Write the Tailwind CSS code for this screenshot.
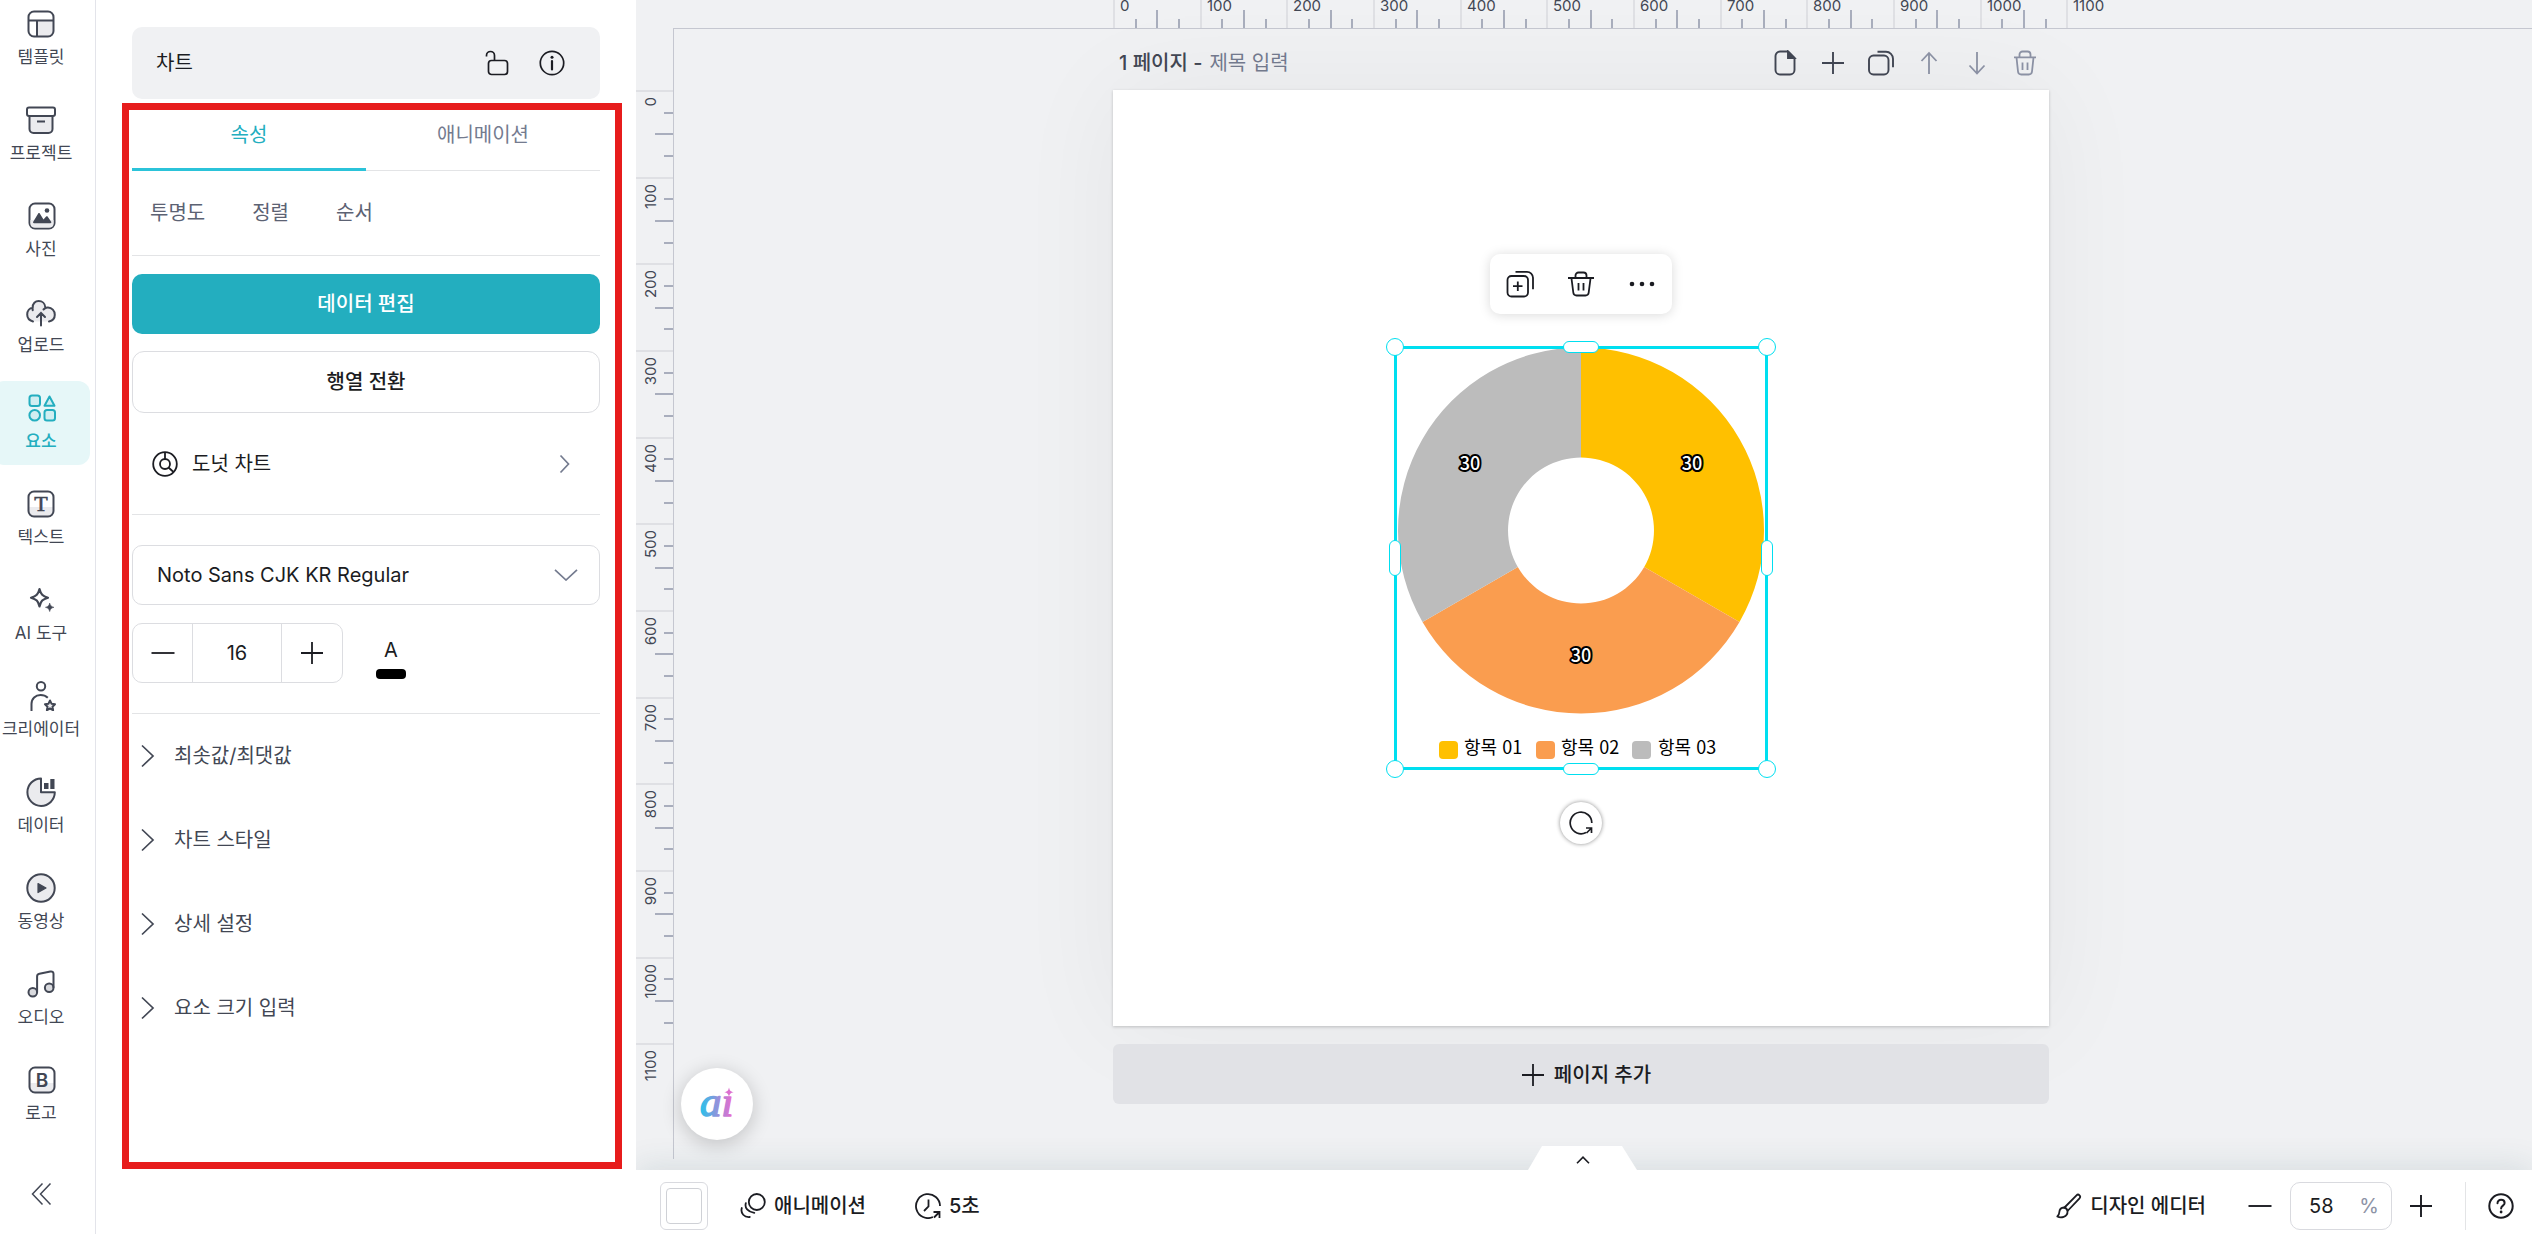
<!DOCTYPE html>
<html lang="ko">
<head>
    <meta charset="UTF-8">
    <meta name="viewport" content="width=device-width, initial-scale=1.0">
    <title>디자인 에디터</title>
    <script src="https://cdn.jsdelivr.net/npm/@tailwindcss/browser@4"></script>
</head>
<body class="flex h-screen overflow-hidden bg-white font-['Inter','Noto_Sans_CJK_KR',sans-serif] text-[20px] leading-7 text-[#1b1c22]">

    <!-- Icon rail -->
    <nav class="flex w-24 shrink-0 flex-col overflow-hidden border-r border-[#e3e4ea] text-[17px] leading-5 text-[#424754]">
        <ul class="-mt-[3px] -ml-2 flex w-[98px] flex-col gap-3">
            <li>
                <a href="#template" class="flex h-[84px] flex-col items-center gap-2 pt-3">
                    <svg class="size-[30px]" viewBox="0 0 30 30" fill="none" stroke="currentColor" stroke-width="2">
                        <path d="M11 11.500H27.500V22a5.500 5.500 0 0 1-5.500 5.500H11z" fill="#ebebee" stroke="none" />
                        <rect x="2.500" y="2.500" width="25" height="25" rx="5.500" />
                        <path d="M2.500 11.500h25M11 11.500v16" />
                    </svg>
                    템플릿
                </a>
            </li>
            <li>
                <a href="#project" class="flex h-[84px] flex-col items-center gap-2 pt-3">
                    <svg class="size-[30px]" viewBox="0 0 30 30" fill="none" stroke="currentColor" stroke-width="2">
                        <path d="M3.500 11v13a4 4 0 0 0 4 4h15a4 4 0 0 0 4-4V11z" fill="#ebebee" />
                        <rect x="1" y="2.500" width="28" height="8.500" rx="2" fill="#fff" />
                        <path d="M11 16.500h8" />
                    </svg>
                    프로젝트
                </a>
            </li>
            <li>
                <a href="#photo" class="flex h-[84px] flex-col items-center gap-2 pt-3">
                    <svg class="size-[30px]" viewBox="0 0 30 30" fill="none" stroke="currentColor" stroke-width="2">
                        <rect x="3.500" y="2.500" width="25" height="25" rx="5.500" />
                        <path d="M4.500 19h23v3.500a4 4 0 0 1-4 4h-15a4 4 0 0 1-4-4z" fill="#ebebee" stroke="none" />
                        <circle cx="21" cy="9.500" r="2.300" fill="currentColor" stroke="none" />
                        <path d="M8 22.300c-.8 0-1.200-.8-.8-1.500l5-8.300c.4-.6 1.200-.6 1.600 0l3.700 6 2.600-3c.4-.5 1.100-.5 1.500 0l3.600 5.300c.4.700 0 1.500-.8 1.500z" fill="currentColor" stroke="none" />
                    </svg>
                    사진
                </a>
            </li>
            <li>
                <a href="#upload" class="flex h-[84px] flex-col items-center gap-2 pt-3">
                    <svg class="size-[30px]" viewBox="0 0 30 30" fill="none" stroke="currentColor" stroke-width="2" stroke-linecap="round">
                        <path d="M7 24.500C3.500 23.500 1.200 21 1.200 17.500c0-3.700 2.500-6.500 6-6.800C7 6.500 9.500 4 13.200 4c3.500 0 6.200 2.600 6.500 6.300 5 .2 9 3 9 7.700 0 3.300-2.200 5.700-5.500 6.500z" fill="#ebebee" stroke="none" />
                        <path d="M7 24.500C3.500 23.500 1.200 21 1.200 17.500c0-3.700 2.300-6.400 5.500-6.800C6.500 6.500 9.300 4 12.700 4c3.300 0 6.400 2.300 6.600 6.300M17.500 12.500c1.500-1.800 3-2.200 4.500-2.100 3.800.3 6.800 3.300 6.800 7.300 0 3.600-2.300 6-5.800 6.800M6.700 10.700v2.500M15 28.500V16.200M11 20l4-4 4 4" />
                    </svg>
                    업로드
                </a>
            </li>
            <li>
                <a href="#element" aria-current="page" class="flex h-[84px] flex-col items-center gap-2 rounded-xl bg-[#e6f7f8] pt-3 font-medium text-[#23aebf]">
                    <svg class="size-[30px]" viewBox="0 0 30 30" fill="#d0eef1" stroke="currentColor" stroke-width="2">
                        <rect x="3.500" y="2.500" width="10.500" height="10.500" rx="2.500" />
                        <path d="M23.500 3.500l5 9.300h-10z" stroke-linejoin="round" />
                        <circle cx="8.700" cy="22.300" r="5.300" />
                        <rect x="18.500" y="17" width="10.500" height="10.500" rx="2.500" />
                    </svg>
                    요소
                </a>
            </li>
            <li>
                <a href="#text" class="flex h-[84px] flex-col items-center gap-2 pt-3">
                    <svg class="size-[30px]" viewBox="0 0 30 30" fill="none" stroke="currentColor" stroke-width="2">
                        <path d="M3 18h24v4.500a5 5 0 0 1-5 5H8a5 5 0 0 1-5-5z" fill="#ebebee" stroke="none" />
                        <rect x="2.500" y="2.500" width="25" height="25" rx="5.500" />
                        <text x="15" y="22" text-anchor="middle" font-family="Liberation Serif" font-size="22" fill="currentColor" stroke-width=".6">T</text>
                    </svg>
                    텍스트
                </a>
            </li>
            <li>
                <a href="#ai" class="flex h-[84px] flex-col items-center gap-2 pt-3">
                    <svg class="size-[30px]" viewBox="0 0 30 30" fill="none" stroke="currentColor" stroke-width="2.200" stroke-linejoin="round">
                        <path d="M13.500 4c1.400 5.500 3 7.200 8.500 8.700-5.500 1.500-7.100 3.200-8.500 8.700-1.400-5.500-3-7.200-8.500-8.700 5.500-1.500 7.100-3.200 8.500-8.700z" />
                        <path d="M23.700 18c.8 2.800 1.500 3.500 4.300 4.300-2.800.8-3.500 1.500-4.300 4.300-.8-2.800-1.500-3.500-4.300-4.300 2.800-.8 3.500-1.500 4.300-4.300z" fill="currentColor" stroke-width=".5" />
                    </svg>
                    AI 도구
                </a>
            </li>
            <li>
                <a href="#creator" class="flex h-[84px] flex-col items-center gap-2 pt-3">
                    <svg class="size-[30px]" viewBox="0 0 30 30" fill="none" stroke="currentColor" stroke-width="2">
                        <circle cx="15" cy="5.200" r="4.200" />
                        <path d="M5.500 30v-7c0-5.500 4-9 9-9 3 0 5.300.8 7.300 2.700" />
                        <path d="M24 19.500l1.500 3.200 3.500.5-2.500 2.500.6 3.500-3.100-1.700-3.100 1.700.6-3.500-2.500-2.500 3.500-.5z" fill="#ebebee" stroke-linejoin="round" />
                    </svg>
                    크리에이터
                </a>
            </li>
            <li>
                <a href="#data" class="flex h-[84px] flex-col items-center gap-2 pt-3">
                    <svg class="size-[30px]" viewBox="0 0 30 30" fill="none" stroke="currentColor" stroke-width="2">
                        <path d="M15 1.500a13.700 13.700 0 1 0 13.800 13.800H15z" fill="#ebebee" stroke-linejoin="round" />
                        <path d="M18 6h4.500v6H18zM24.300 2h4.200v10h-4.200z" fill="currentColor" stroke="none" />
                    </svg>
                    데이터
                </a>
            </li>
            <li>
                <a href="#video" class="flex h-[84px] flex-col items-center gap-2 pt-3">
                    <svg class="size-[30px]" viewBox="0 0 30 30" fill="none" stroke="currentColor" stroke-width="2">
                        <circle cx="15" cy="15" r="13.700" fill="#ebebee" />
                        <path d="M12 10.500l8 4.500-8 4.500z" fill="currentColor" stroke-width="1.200" stroke-linejoin="round" />
                    </svg>
                    동영상
                </a>
            </li>
            <li>
                <a href="#audio" class="flex h-[84px] flex-col items-center gap-2 pt-3">
                    <svg class="size-[30px]" viewBox="0 0 30 30" fill="none" stroke="currentColor" stroke-width="2" stroke-linejoin="round">
                        <circle cx="6.800" cy="23.300" r="4.300" fill="#d9dade" />
                        <circle cx="23.200" cy="18.700" r="4.300" fill="#d9dade" />
                        <path d="M11.100 23.300V7.500c0-1.500.8-2.500 2.300-2.800l11-2.200c1.800-.4 3.100.6 3.100 2.300v13.900" />
                    </svg>
                    오디오
                </a>
            </li>
            <li>
                <a href="#logo" class="flex h-[84px] flex-col items-center gap-2 pt-3">
                    <svg class="size-[30px]" viewBox="0 0 30 30" fill="none" stroke="currentColor" stroke-width="2">
                        <path d="M4 18h24v4.500a5 5 0 0 1-5 5H9a5 5 0 0 1-5-5z" fill="#ebebee" stroke="none" />
                        <rect x="3.500" y="2.500" width="25" height="25" rx="5.500" />
                        <text x="16" y="22" text-anchor="middle" font-family="Inter" font-size="19" font-weight="600" fill="currentColor" stroke="none">B</text>
                    </svg>
                    로고
                </a>
            </li>
        </ul>
        <button type="button" aria-label="접기" class="mt-auto mb-6 flex h-8 w-[82px] shrink-0 items-center justify-center">
            <svg class="size-6" viewBox="0 0 24 24" fill="none" stroke="currentColor" stroke-width="1.500">
                <path d="M13.500 1.500L3.500 12l10 10.500M21.500 1.500L11.500 12l10 10.500" />
            </svg>
        </button>
    </nav>

    <!-- Property panel -->
    <aside class="flex w-[540px] shrink-0 flex-col pt-[27px] pr-[14px] pb-[65px] pl-[26px]">
        <header class="mr-[22px] ml-[10px] flex h-[72px] shrink-0 items-center rounded-[10px] bg-[#f0f1f3] pr-[35px] pl-6">
            <h1 class="mr-auto">차트</h1>
            <button type="button" aria-label="잠금" class="mr-[29px]">
                <svg class="size-[26px]" viewBox="0 0 26 26" fill="none" stroke="currentColor" stroke-width="1.700">
                    <path d="M2.500 6.500v-1a4 4 0 0 1 8 0v5" />
                    <rect x="4.500" y="10.500" width="19" height="14" rx="3" />
                </svg>
            </button>
            <button type="button" aria-label="정보">
                <svg class="size-[26px]" viewBox="0 0 26 26" fill="none" stroke="currentColor" stroke-width="1.700">
                    <circle cx="13" cy="13" r="11.700" />
                    <path d="M13 11v8.500" stroke-width="2.200" stroke-linecap="round" />
                    <circle cx="13" cy="7.200" r="1.500" fill="currentColor" stroke="none" />
                </svg>
            </button>
        </header>

        <section class="mt-1 flex grow flex-col border-[7px] border-[#e71c1c] pr-[15px] pl-[3px]">
            <div role="tablist" class="grid h-[61px] grid-cols-2 text-center">
                <button type="button" role="tab" aria-selected="true" class="border-b-3 border-[#2bc3d9] pb-2 text-[#23aebf]">속성</button>
                <button type="button" role="tab" aria-selected="false" class="border-b border-[#e3e4e6] pb-[10px] text-[#747b8f]">애니메이션</button>
            </div>

            <div class="flex h-[85px] items-center gap-[47px] border-b border-[#e3e4e6] px-[18px] text-[#5c6273]">
                <button type="button">투명도</button>
                <button type="button">정렬</button>
                <button type="button">순서</button>
            </div>

            <button type="button" class="mt-[18px] h-15 rounded-[10px] bg-[#23aebf] font-medium text-white">데이터 편집</button>
            <button type="button" class="mt-[17px] h-[62px] rounded-xl border border-[#dcdde1] font-medium">행열 전환</button>

            <button type="button" class="flex h-[102px] items-center border-b border-[#e3e4e6] pr-[26px] pl-5">
                <svg class="mr-[14px] size-[26px]" viewBox="0 0 26 26" fill="none" stroke="currentColor" stroke-width="1.800">
                    <circle cx="13" cy="13" r="11.800" />
                    <circle cx="13" cy="13" r="5" />
                    <path d="M13 1.500V8M16.500 16.500l5 4.500" />
                </svg>
                도넛 차트
                <svg class="ml-auto h-5 w-[26px] text-[#747b8f]" viewBox="0 0 26 20" fill="none" stroke="currentColor" stroke-width="1.700">
                    <path d="M12.500 1.500l8 8.500-8 8.500" />
                </svg>
            </button>

            <div class="relative mt-[30px]">
                <select aria-label="글꼴" class="h-15 w-full appearance-none rounded-[10px] border border-[#dcdde1] bg-white px-6">
                    <option>Noto Sans CJK KR Regular</option>
                </select>
                <svg class="pointer-events-none absolute top-6 right-[22px] h-3 w-6 text-[#747b8f]" viewBox="0 0 24 12" fill="none" stroke="currentColor" stroke-width="1.700">
                    <path d="M1 .8L12 11 23 .8" />
                </svg>
            </div>

            <div class="mt-[18px] flex items-center border-b border-[#e3e4e6] pb-[30px]">
                <div class="flex h-15 w-[211px] divide-x divide-[#dcdde1] rounded-[10px] border border-[#dcdde1]">
                    <button type="button" aria-label="글자 작게" class="flex w-[60px] items-center justify-center">
                        <svg class="size-6" viewBox="0 0 24 24" fill="none" stroke="currentColor" stroke-width="1.800"><path d="M.5 12h23" /></svg>
                    </button>
                    <input type="text" aria-label="글자 크기" value="16" class="w-0 grow text-center">
                    <button type="button" aria-label="글자 크게" class="flex w-[60px] items-center justify-center">
                        <svg class="size-6" viewBox="0 0 24 24" fill="none" stroke="currentColor" stroke-width="1.800"><path d="M1 12h22M12 1v22" /></svg>
                    </button>
                </div>
                <button type="button" aria-label="글자 색" class="ml-[33px] flex flex-col items-center gap-[5px] pt-2">
                    <span>A</span>
                    <span class="h-[10px] w-[30px] rounded bg-black"></span>
                </button>
            </div>

            <ul class="text-[#424754]">
                <li>
                    <button type="button" class="flex h-21 w-full items-center gap-[19px] pl-[9px]">
                        <svg class="h-6 w-[14px]" viewBox="0 0 14 24" fill="none" stroke="currentColor" stroke-width="1.700"><path d="M1 1.500L12 12 1 22.500" /></svg>
                        최솟값/최댓값
                    </button>
                </li>
                <li>
                    <button type="button" class="flex h-21 w-full items-center gap-[19px] pl-[9px]">
                        <svg class="h-6 w-[14px]" viewBox="0 0 14 24" fill="none" stroke="currentColor" stroke-width="1.700"><path d="M1 1.500L12 12 1 22.500" /></svg>
                        차트 스타일
                    </button>
                </li>
                <li>
                    <button type="button" class="flex h-21 w-full items-center gap-[19px] pl-[9px]">
                        <svg class="h-6 w-[14px]" viewBox="0 0 14 24" fill="none" stroke="currentColor" stroke-width="1.700"><path d="M1 1.500L12 12 1 22.500" /></svg>
                        상세 설정
                    </button>
                </li>
                <li>
                    <button type="button" class="flex h-21 w-full items-center gap-[19px] pl-[9px]">
                        <svg class="h-6 w-[14px]" viewBox="0 0 14 24" fill="none" stroke="currentColor" stroke-width="1.700"><path d="M1 1.500L12 12 1 22.500" /></svg>
                        요소 크기 입력
                    </button>
                </li>
            </ul>
        </section>
    </aside>

    <div class="flex min-w-0 grow flex-col overflow-hidden">
        <div class="flex min-h-0 grow overflow-hidden bg-[#f0f1f3]">
            <!-- Vertical ruler -->
            <div class="mb-[11px] flex w-[38px] shrink-0 flex-col pt-7">
                <div id="ruler-y" class="relative grow border-r border-[#c5c7d0] text-[15px] leading-5 text-[#424754]"></div>
            </div>

            <main class="relative flex min-w-0 grow flex-col">
                <!-- Horizontal ruler -->
                <div class="h-[29px] shrink-0 border-b border-[#c5c7d0] pr-11">
                    <div id="ruler-x" class="relative mx-auto h-7 w-[936px] text-[15px] leading-3 text-[#424754]"></div>
                </div>

                <div class="flex grow flex-col items-center pr-11">
                    <div class="w-[936px]">
                        <div class="flex h-[61px] items-center pt-[6px] pl-[6px] text-[#424754]">
                            <h2 class="font-medium">1 페이지 -</h2>
                            <input type="text" aria-label="페이지 제목" placeholder="제목 입력" class="ml-[7px] w-0 grow placeholder:text-[#747b8f]">
                            <div class="flex gap-[22px] pr-[11px]">
                                <button type="button" aria-label="메모">
                                    <svg class="size-[26px]" viewBox="0 0 26 26" fill="none" stroke="currentColor" stroke-width="1.900">
                                        <path d="M16 1.500H8a4.500 4.500 0 0 0-4.500 4.500v14A4.500 4.500 0 0 0 8 24.500h10a4.500 4.500 0 0 0 4.500-4.500V8z" stroke-linejoin="round" />
                                        <path d="M16 1.500V8h6.500z" fill="currentColor" />
                                    </svg>
                                </button>
                                <button type="button" aria-label="페이지 추가">
                                    <svg class="size-[26px]" viewBox="0 0 26 26" fill="none" stroke="currentColor" stroke-width="1.900"><path d="M2 13h22M13 2v22" /></svg>
                                </button>
                                <button type="button" aria-label="페이지 복제">
                                    <svg class="size-[26px]" viewBox="0 0 26 26" fill="none" stroke="currentColor" stroke-width="1.900">
                                        <rect x="1" y="5.500" width="19.500" height="19" rx="4.500" />
                                        <path d="M9.500 1.800h8.500a7 7 0 0 1 7 7v8.500" />
                                    </svg>
                                </button>
                                <button type="button" aria-label="위로" class="text-[#8d93a6]">
                                    <svg class="size-[26px]" viewBox="0 0 26 26" fill="none" stroke="currentColor" stroke-width="1.800"><path d="M13 24V3M5.500 11L13 3l7.500 8" /></svg>
                                </button>
                                <button type="button" aria-label="아래로" class="text-[#8d93a6]">
                                    <svg class="size-[26px]" viewBox="0 0 26 26" fill="none" stroke="currentColor" stroke-width="1.800"><path d="M13 2v21M5.500 15.500l7.500 8 7.500-8" /></svg>
                                </button>
                                <button type="button" aria-label="페이지 삭제" class="text-[#8d93a6]">
                                    <svg class="size-[26px]" viewBox="0 0 26 26" fill="none" stroke="currentColor" stroke-width="1.800">
                                        <path d="M2 7.300h22M7.500 7V4.500a3 3 0 0 1 3-3h5a3 3 0 0 1 3 3V7M4.500 7.500l1.500 14a3.300 3.300 0 0 0 3.300 3h7.400a3.300 3.300 0 0 0 3.300-3l1.500-14M10.500 12.500V20M15.500 12.500V20" />
                                    </svg>
                                </button>
                            </div>
                        </div>

                        <!-- Page -->
                        <div class="relative h-[936px] bg-white shadow-[0_1px_3px_rgba(0,0,0,0.2),0_0_100px_rgba(0,0,0,0.05)]">
                            <!-- Element toolbar -->
                            <div class="absolute top-[164px] left-1/2 grid h-15 w-[182px] -translate-x-1/2 grid-cols-3 place-items-center rounded-[10px] bg-white shadow-[0_1px_12px_rgba(0,0,0,0.15)]">
                                <button type="button" aria-label="복제">
                                    <svg class="size-7" viewBox="0 0 28 28" fill="none" stroke="currentColor" stroke-width="1.800">
                                        <rect x="1.500" y="6" width="20.500" height="20.500" rx="4" />
                                        <path d="M9.500 1.800H21a6 6 0 0 1 6 6v11.500M7 16.200h9.500M11.800 11.500V21" />
                                    </svg>
                                </button>
                                <button type="button" aria-label="삭제">
                                    <svg class="size-[26px]" viewBox="0 0 26 26" fill="none" stroke="currentColor" stroke-width="1.800">
                                        <path d="M0 7h26M7.500 7V4.500a3 3 0 0 1 3-3h5a3 3 0 0 1 3 3V7M3.500 7.500l1.800 14a3.300 3.300 0 0 0 3.300 3h8.800a3.300 3.300 0 0 0 3.300-3l1.800-14M10.500 12v7.500M15.500 12v7.500" />
                                    </svg>
                                </button>
                                <button type="button" aria-label="더보기">
                                    <svg class="size-[26px]" viewBox="0 0 26 26" fill="currentColor">
                                        <circle cx="3" cy="13" r="2.300" /><circle cx="13" cy="13" r="2.300" /><circle cx="23" cy="13" r="2.300" />
                                    </svg>
                                </button>
                            </div>

                            <!-- Donut chart with selection box -->
                            <div class="absolute top-[256px] left-[281px] w-[374px]">
                                <svg class="block h-[424px] w-[374px] font-['Noto_Sans_CJK_KR',sans-serif]" viewBox="0 0 374 424" role="img" aria-label="도넛 차트">
                                    <path d="M187 1.500A183 183 0 0 1 345.500 276L250.200 221A73 73 0 0 0 187 111.500z" fill="#ffc000" />
                                    <path d="M345.500 276A183 183 0 0 1 28.500 276L123.800 221A73 73 0 0 0 250.200 221z" fill="#fa9d4f" />
                                    <path d="M28.500 276A183 183 0 0 1 187 1.500V111.500A73 73 0 0 0 123.800 221z" fill="#bcbcbc" />
                                    <g fill="#fff" stroke="#000" stroke-width="4" stroke-linejoin="round" paint-order="stroke" font-size="18" font-weight="500" text-anchor="middle">
                                        <text x="298" y="124">30</text>
                                        <text x="187" y="316">30</text>
                                        <text x="76" y="124">30</text>
                                    </g>
                                    <rect x="45" y="395" width="19" height="18" rx="4" fill="#ffc000" />
                                    <rect x="142" y="395" width="19" height="18" rx="4" fill="#fa9d4f" />
                                    <rect x="238" y="395" width="19" height="18" rx="4" fill="#bcbcbc" />
                                    <g font-size="18" fill="#000">
                                        <text x="70" y="408">항목 01</text>
                                        <text x="167" y="408">항목 02</text>
                                        <text x="264" y="408">항목 03</text>
                                    </g>
                                </svg>
                                <div class="absolute inset-0 border-3 border-[#00dff0]"></div>
                                <span class="absolute top-0 left-0 size-[18px] -translate-x-2 -translate-y-2 rounded-full border border-[#00dff0] bg-white"></span>
                                <span class="absolute top-0 right-0 size-[18px] translate-x-2 -translate-y-2 rounded-full border border-[#00dff0] bg-white"></span>
                                <span class="absolute bottom-0 left-0 size-[18px] -translate-x-2 translate-y-2 rounded-full border border-[#00dff0] bg-white"></span>
                                <span class="absolute right-0 bottom-0 size-[18px] translate-x-2 translate-y-2 rounded-full border border-[#00dff0] bg-white"></span>
                                <span class="absolute -top-[5px] left-1/2 h-3 w-9 -translate-x-1/2 rounded-full border border-[#00dff0] bg-white"></span>
                                <span class="absolute -bottom-[5px] left-1/2 h-3 w-9 -translate-x-1/2 rounded-full border border-[#00dff0] bg-white"></span>
                                <span class="absolute top-1/2 -left-[5px] h-9 w-3 -translate-y-1/2 rounded-full border border-[#00dff0] bg-white"></span>
                                <span class="absolute top-1/2 -right-[5px] h-9 w-3 -translate-y-1/2 rounded-full border border-[#00dff0] bg-white"></span>
                                <button type="button" aria-label="회전" class="absolute -bottom-[74px] left-1/2 flex size-[42px] -translate-x-1/2 items-center justify-center rounded-full bg-white shadow-[0_0_4px_rgba(0,0,0,0.45)]">
                                    <svg class="size-6" viewBox="0 0 24 24" fill="none" stroke="currentColor" stroke-width="1.700">
                                        <path d="M22.800 12A10.800 10.800 0 1 0 17 21.500M17 17h5.500v5M22 17.500L17.500 22" />
                                    </svg>
                                </button>
                            </div>
                        </div>

                        <button type="button" class="relative mt-[18px] flex h-15 w-full items-center justify-center gap-[9px] rounded-md bg-[#e1e2e6] pt-px pl-[10px] font-medium">
                            <svg class="size-6" viewBox="0 0 24 24" fill="none" stroke="currentColor" stroke-width="1.800"><path d="M1 12h22M12 1v22" /></svg>
                            페이지 추가
                        </button>
                    </div>
                </div>

                <button type="button" aria-label="AI" class="absolute bottom-[30px] left-[7px] size-[72px] rounded-full bg-white shadow-[0_4px_20px_rgba(0,0,0,0.2)]">
                    <svg class="size-[72px]" viewBox="0 0 72 72">
                        <defs>
                            <linearGradient id="ai-fill" gradientUnits="userSpaceOnUse" x1="19" y1="0" x2="53" y2="0">
                                <stop offset="0" stop-color="#24c4ea" />
                                <stop offset=".5" stop-color="#8f93dc" />
                                <stop offset="1" stop-color="#f566cc" />
                            </linearGradient>
                        </defs>
                        <text x="19" y="48" font-family="Liberation Serif" font-size="43" font-style="italic" fill="url(#ai-fill)" stroke="url(#ai-fill)" stroke-width="1.500" stroke-linejoin="round">aı</text>
                        <path d="M48 19.500c.8 3.300 1.400 3.900 4.700 4.700-3.300.8-3.900 1.400-4.700 4.700-.8-3.300-1.400-3.900-4.700-4.700 3.300-.8 3.900-1.400 4.700-4.700z" fill="#dd70d0" />
                    </svg>
                </button>
            </main>
        </div>

        <!-- Bottom bar -->
        <footer class="relative flex h-16 shrink-0 items-center bg-white pt-2 pr-[18px] pl-6 font-medium shadow-[0_-4px_32px_rgba(30,80,90,0.12)]">
            <button type="button" aria-label="페이지 목록 열기" class="absolute -top-6 left-[892px] flex h-6 w-[109px] items-center justify-center">
                <svg class="absolute inset-0 h-6 w-[109px]" viewBox="0 0 109 24"><path d="M14 0h80l15 24H0z" fill="#fff" /></svg>
                <svg class="relative mt-1 h-2 w-[14px]" viewBox="0 0 14 8" fill="none" stroke="currentColor" stroke-width="1.600"><path d="M1 7.200L7 1.200l6 6" /></svg>
            </button>

            <button type="button" aria-label="배경색" class="flex size-12 items-center justify-center rounded-md border border-[#d9dadf]">
                <span class="size-9 rounded-sm border border-[#cfd1d6]"></span>
            </button>
            <button type="button" class="ml-8 flex items-center gap-2">
                <svg class="size-[26px]" viewBox="0 0 26 26" fill="none" stroke="currentColor" stroke-width="1.800" stroke-linecap="round">
                    <circle cx="16.800" cy="9" r="8" />
                    <path d="M5.800 10.200c-1.300 4.500 2 8.800 8.500 9.600M1.800 15c-1.500 5.500 2.500 9.500 8 9" />
                </svg>
                애니메이션
            </button>
            <button type="button" class="ml-[49px] flex items-center gap-2">
                <svg class="size-[26px]" viewBox="0 0 26 26" fill="none" stroke="currentColor" stroke-width="1.800">
                    <path d="M25 13A12 12 0 1 0 18 24M13.500 6.500v7L9 18M18.500 19h6v6M24 19.500L19 24.500" />
                </svg>
                5초
            </button>

            <button type="button" class="ml-auto flex items-center gap-2">
                <svg class="size-[26px]" viewBox="0 0 26 26" fill="none" stroke="currentColor" stroke-width="1.800" stroke-linejoin="round">
                    <path d="M8 15L20.500 2.300c1-1 2-1 3 0s1 2 0 3L11.500 18" />
                    <path d="M8 14.500c-3 .2-4.500 1.800-4.700 4.700-.1 2-.7 3.200-2 4.300 3.200 1.500 10.500 1 10.200-5.300C11.200 15.800 10 14.800 8 14.500z" />
                </svg>
                디자인 에디터
            </button>
            <button type="button" aria-label="축소" class="ml-[42px]">
                <svg class="size-6" viewBox="0 0 24 24" fill="none" stroke="currentColor" stroke-width="1.900"><path d="M.5 12h23" /></svg>
            </button>
            <label class="ml-[18px] flex h-12 w-[102px] items-center rounded-[10px] border border-[#d9dadf] pr-3 pl-[18px] font-normal">
                <input type="text" aria-label="배율" value="58" class="w-0 grow">
                <span class="text-[#8d93a6]">%</span>
            </label>
            <button type="button" aria-label="확대" class="ml-[17px]">
                <svg class="size-6" viewBox="0 0 24 24" fill="none" stroke="currentColor" stroke-width="1.900"><path d="M1 12h22M12 1v22" /></svg>
            </button>
            <span class="ml-8 h-12 w-px bg-[#e3e4e6]"></span>
            <button type="button" aria-label="도움말" class="ml-[22px]">
                <svg class="size-[26px]" viewBox="0 0 26 26" fill="none" stroke="currentColor" stroke-width="2">
                    <circle cx="13" cy="13" r="11.700" />
                    <path d="M9.500 10.300c0-2.200 1.500-3.600 3.600-3.600s3.500 1.300 3.500 3.200c0 2.700-3.500 2.800-3.500 5.600" stroke-linecap="round" />
                    <circle cx="13.100" cy="19" r="1.400" fill="currentColor" stroke="none" />
                </svg>
            </button>
        </footer>
    </div>

    <script>
        const pageSize = 1080;
        const pagePixels = 936;
        const rulerX = document.getElementById('ruler-x');
        const rulerY = document.getElementById('ruler-y');

        function addMark(ruler, className, style, text) {
            const mark = document.createElement('span');
            mark.className = className;
            mark.style.cssText = style;
            mark.textContent = text || '';
            ruler.appendChild(mark);
        }

        for (let value = 0; value <= 1100; value += 25) {
            const x = Math.round(value * pagePixels / pageSize);
            const y = x + 62;
            if (value % 100 === 0) {
                addMark(rulerX, 'absolute top-0 h-7 w-[2px] bg-[#dfe0e4]', `left:${x}px`);
                addMark(rulerX, 'absolute top-0 pl-[7px]', `left:${x}px`, String(value));
                addMark(rulerY, 'absolute left-0 h-[2px] w-[37px] bg-[#dfe0e4]', `top:${y}px`);
                addMark(rulerY, 'absolute left-[5px] rotate-180 pb-[7px] [writing-mode:vertical-rl]', `top:${y}px`, String(value));
            } else if (value % 50 === 0) {
                addMark(rulerX, 'absolute bottom-0 h-[18px] w-[2px] bg-[#a9aebd]', `left:${x}px`);
                addMark(rulerY, 'absolute right-0 h-[2px] w-[18px] bg-[#a9aebd]', `top:${y}px`);
            } else {
                addMark(rulerX, 'absolute bottom-0 h-[9px] w-[2px] bg-[#a9aebd]', `left:${x}px`);
                addMark(rulerY, 'absolute right-0 h-[2px] w-[9px] bg-[#a9aebd]', `top:${y}px`);
            }
        }
    </script>
</body>
</html>
